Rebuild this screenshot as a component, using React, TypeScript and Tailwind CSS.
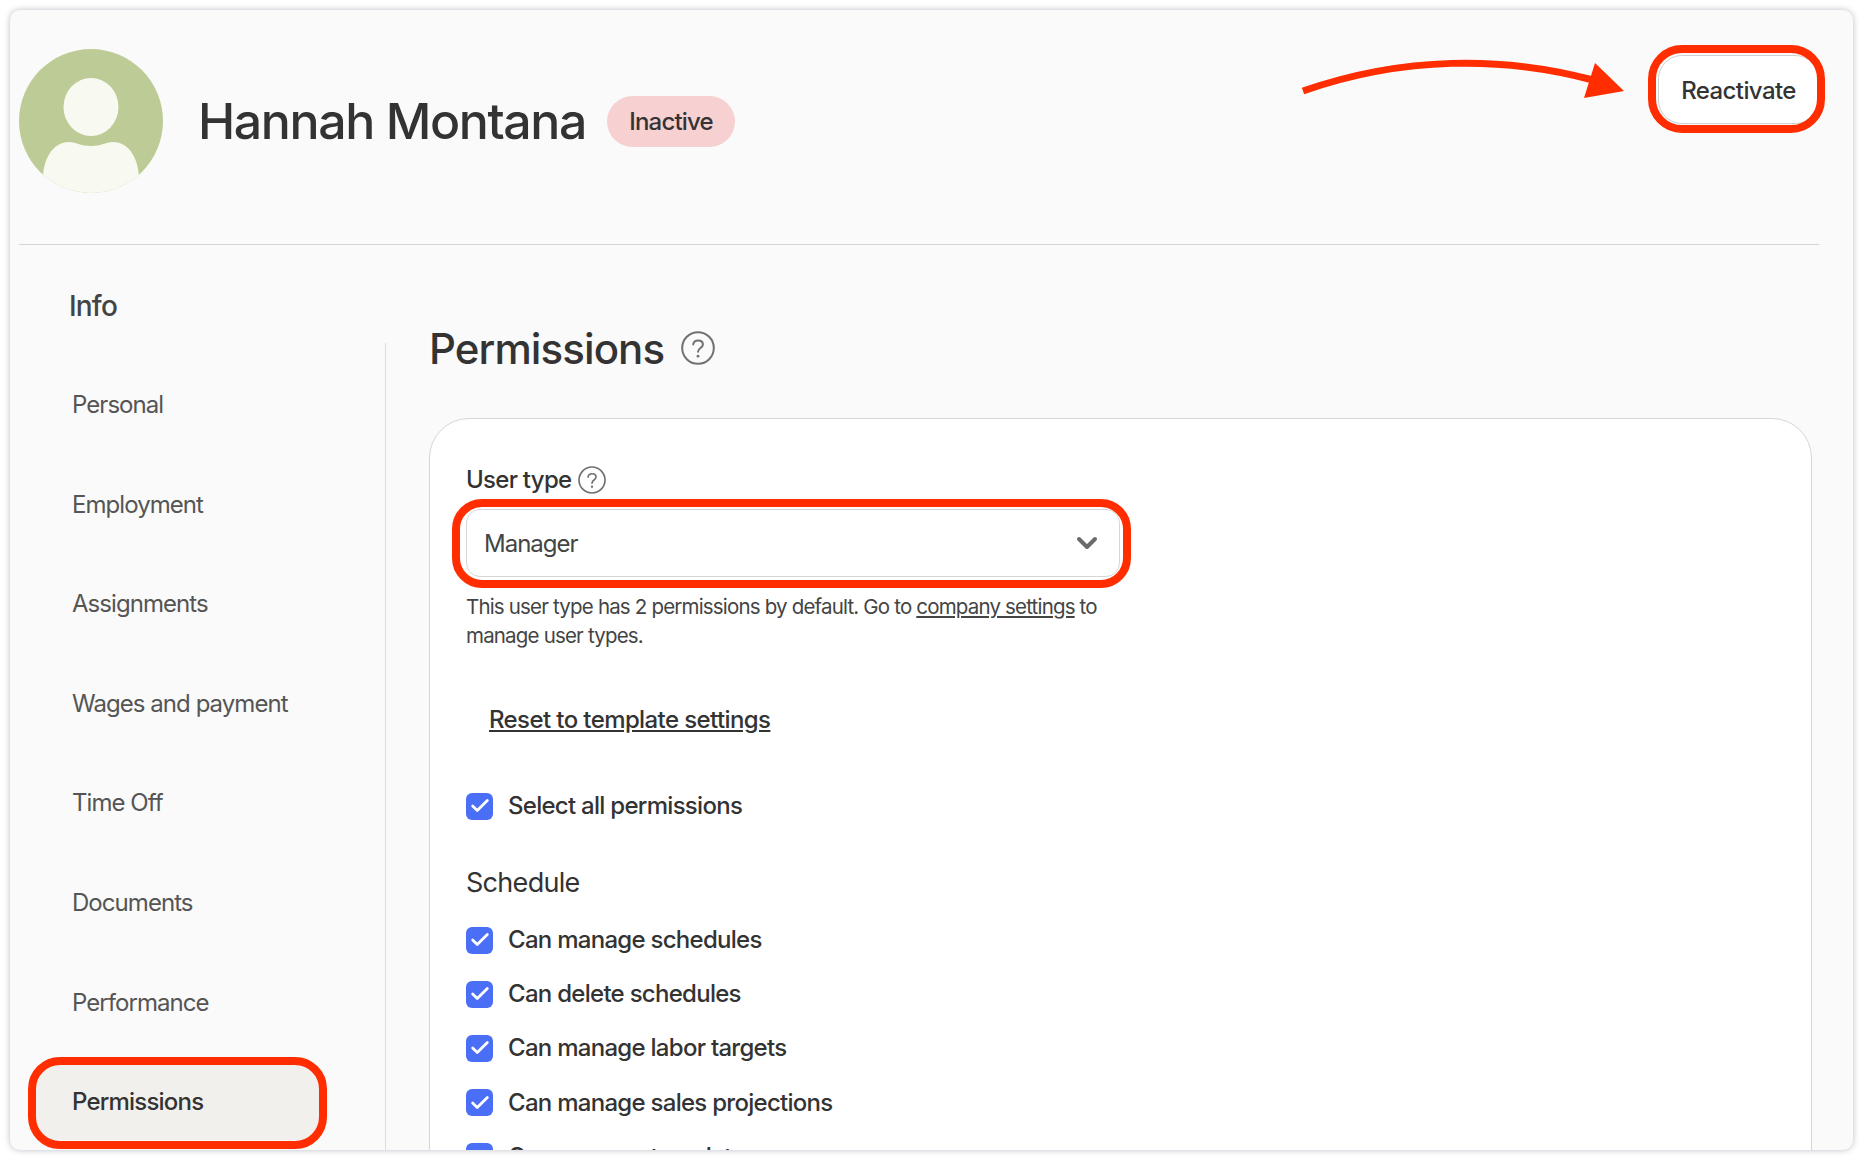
import { Check, ChevronDown } from "lucide-react";

const NAV_ITEMS = ["Personal", "Employment", "Assignments", "Wages and payment", "Time Off", "Documents", "Performance", "Permissions"];

const SCHEDULE_PERMISSIONS = [
  "Can manage schedules",
  "Can delete schedules",
  "Can manage labor targets",
  "Can manage sales projections",
  "Can manage templates",
];

const RedRing = ({ className }: { className: string }) => (
  <span className={`absolute border-[8px] border-[#ff2d00] pointer-events-none ${className}`} />
);

const HelpIcon = ({ className }: { className: string }) => (
  <svg viewBox="0 0 34 34" fill="none" stroke="#707070" strokeWidth="2" className={className}>
    <circle cx="17" cy="17" r="15.8" />
    <path d="M12.2 13.4c.4-2.6 2.3-4 4.9-4 2.8 0 4.8 1.6 4.8 4 0 3.6-4.9 3.6-4.9 7.4" strokeLinecap="round" />
    <circle cx="17" cy="25.2" r="1.4" fill="#707070" stroke="none" />
  </svg>
);

const Avatar = () => (
  <svg viewBox="0 0 144 144" className="w-36 h-36 shrink-0">
    <defs>
      <clipPath id="avatar-clip">
        <circle cx="72" cy="72" r="72" />
      </clipPath>
    </defs>
    <circle cx="72" cy="72" r="72" fill="#bdcc96" />
    <g clipPath="url(#avatar-clip)" fill="#f8faf2">
      <ellipse cx="72" cy="58" rx="27.5" ry="29" />
      <path d="M24 130c0-20 10-37 26-37 7 0 11 4 22 4s15-4 22-4c16 0 26 17 26 37v14H24z" />
    </g>
  </svg>
);

const CheckRow = ({ label }: { label: string }) => (
  <label className="flex items-center h-[30px] gap-[15px]">
    <span className="flex items-center justify-center w-[27px] h-[27px] rounded-[6px] bg-[#4a6ff6] shrink-0">
      <Check className="w-[22px] h-[22px] text-white" strokeWidth={3} />
    </span>
    <span className="text-[24px] font-medium tracking-[-0.72px] text-[#333333] whitespace-nowrap">{label}</span>
  </label>
);

export default function App() {
  return (
    <div className="w-[1864px] h-[1160px] bg-white pt-[10px] pl-[10px] font-['Inter',sans-serif]">
      <div className="relative w-[1843px] h-[1140px] overflow-hidden rounded-[10px] bg-[#fafafa] shadow-[0_0_6px_rgba(60,70,90,0.35)]">
        <header className="flex items-start justify-between h-[235px] ml-[9px] mr-[34px] pt-[39px] border-b border-[#d6d6d8]">
          <div className="flex items-center">
            <Avatar />
            <h1 className="ml-[35px] text-[50px] font-medium tracking-[-1.4px] text-[#333333] whitespace-nowrap">Hannah Montana</h1>
            <span className="flex items-center justify-center ml-[21px] w-[128px] h-[51px] pt-[2px] rounded-full bg-[#f7d0d2] text-[24px] font-medium tracking-[-0.8px] text-[#333333]">
              Inactive
            </span>
          </div>
          <button className="relative mt-[6px] w-[161px] h-[69px] pt-[2px] rounded-[24px] bg-white border border-[#d0d0d0] text-[24px] font-medium tracking-[-0.6px] text-[#333333]">
            Reactivate
            <RedRing className="-top-[11px] -bottom-[10px] -left-[11px] -right-[7px] rounded-[34px]" />
          </button>
        </header>

        <div className="flex">
          <aside className="w-[376px] shrink-0">
            <div className="h-[98px] pt-[46px] pl-[59px] text-[28px] leading-[30px] font-medium tracking-[-0.8px] text-[#444444]">Info</div>
            <nav className="flex flex-col gap-[21.6px] w-[376px] h-[810px] pt-[22px] pl-[23px] border-r border-[#dddddd]">
              {NAV_ITEMS.map(item => {
                const active = item === "Permissions";
                return (
                  <div
                    key={item}
                    className={`relative flex items-center h-[78px] w-[293px] pl-[39px] pt-[2px] text-[24px] shrink-0 ${
                      active ? "bg-[#f1f0ed] rounded-[24px] font-medium tracking-[-0.8px] text-[#333333]" : "tracking-[-0.95px] text-[#555555]"
                    }`}
                  >
                    {item}
                    {active && <RedRing className="-top-[5px] -bottom-[9px] -left-[5px] -right-[1px] rounded-[32px]" />}
                  </div>
                );
              })}
            </nav>
          </aside>

          <main className="pl-[43px] pt-[78px]">
            <div className="flex items-center h-[50px]">
              <h2 className="text-[42px] font-medium tracking-[-0.9px] text-[#333333]">Permissions</h2>
              <HelpIcon className="ml-[17px] w-[34px] h-[34px]" />
            </div>

            <section className="mt-[45px] w-[1383px] h-[900px] rounded-[40px] bg-white border border-[#d6d6d6] pt-[46px] px-[36px]">
              <div className="flex items-center h-[30px] gap-[7px]">
                <span className="text-[24px] font-medium tracking-[-0.72px] text-[#333333]">User type</span>
                <HelpIcon className="w-[28px] h-[28px]" />
              </div>

              <div className="relative flex items-center justify-between mt-[14px] w-[654px] h-[68px] pl-[17px] pr-[16px] rounded-[14px] border border-[#d6d6d6] bg-white">
                <span className="pt-[2px] text-[24px] tracking-[-1px] text-[#444444]">Manager</span>
                <ChevronDown className="w-[32px] h-[32px] text-[#6b6b6b]" strokeWidth={3} />
                <RedRing className="-top-[11px] -bottom-[12px] -left-[15px] -right-[12px] rounded-[30px]" />
              </div>

              <p className="mt-[15px] w-[654px] text-[20.5px] leading-[29px] tracking-[-0.82px] text-[#444444]">
                This user type has 2 permissions by default. Go to <span className="underline">company settings</span> to manage user types.
              </p>

              <div className="mt-[52px] ml-[23px] h-[30px] text-[24px] font-medium tracking-[-0.6px] text-[#333333] underline">Reset to template settings</div>

              <div className="mt-[59px]">
                <CheckRow label="Select all permissions" />
              </div>

              <h3 className="mt-[45px] h-[34px] text-[27px] leading-[34px] tracking-[-0.7px] text-[#333333]">Schedule</h3>

              <div className="flex flex-col gap-[24.2px] mt-[25px]">
                {SCHEDULE_PERMISSIONS.map(p => (
                  <CheckRow key={p} label={p} />
                ))}
              </div>
            </section>
          </main>
        </div>

        <svg viewBox="0 0 400 80" className="absolute left-[1283px] top-[30px] w-[400px] h-[80px]" fill="none">
          <path d="M10 51C110 16 210 16 300 40" stroke="#ff2d00" strokeWidth="7" />
          <path d="M302 23L331 51L291 58z" fill="#ff2d00" />
        </svg>
      </div>
    </div>
  );
}
